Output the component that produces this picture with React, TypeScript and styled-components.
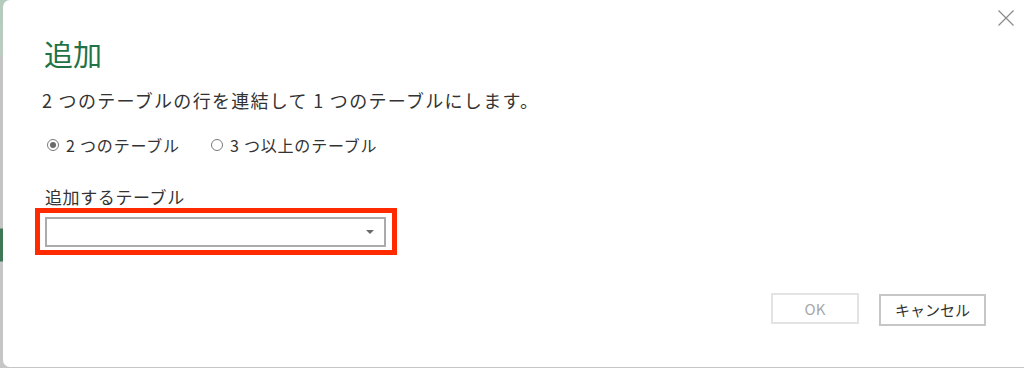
import React from "react";
import styled, { createGlobalStyle } from "styled-components";

const Global = createGlobalStyle`
  html, body { margin: 0; padding: 0; }
  body {
    width: 1024px;
    height: 368px;
    overflow: hidden;
    font-family: "Noto Sans CJK JP", "Noto Sans", sans-serif;
  }
`;

const Backdrop = styled.div`
  display: flex;
  width: 1024px;
  height: 368px;
  background: linear-gradient(
    to bottom,
    #b3cbbd 0px,
    #bcccc2 55px,
    #c4c4c4 56px,
    #c4c4c4 228px,
    #3e7656 229px,
    #3e7656 261px,
    #c6c6c6 262px,
    #c6c6c6 368px
  );
`;

const Dialog = styled.div`
  position: relative;
  flex: 1;
  margin-left: 3px;
  height: 367px;
  background: #ffffff;
  border-radius: 7px 0 0 7px;
  display: flex;
  flex-direction: column;
  padding: 35px 38px 0 39px;
  box-sizing: border-box;
  color: #333333;
`;

const CloseButton = styled.button`
  position: absolute;
  top: 9px;
  right: 9px;
  width: 18px;
  height: 18px;
  padding: 0;
  border: none;
  background: transparent;
  display: flex;
  align-items: center;
  justify-content: center;
`;

const Title = styled.h1`
  margin: 0;
  padding-left: 2px;
  font-size: 29px;
  line-height: 36px;
  font-weight: 400;
  color: #1f7346;
`;

const Description = styled.p`
  margin: 17px 0 0 0;
  font-size: 18px;
  line-height: 24px;
  letter-spacing: 1.3px;
  color: #333333;
`;

const RadioRow = styled.div`
  margin-top: 21px;
  display: flex;
  align-items: center;
  gap: 31px;
  height: 24px;
  padding-left: 5px;
`;

const RadioLabel = styled.label`
  display: flex;
  align-items: center;
  gap: 7px;
  font-size: 16px;
  line-height: 24px;
  color: #333333;
  letter-spacing: 0.8px;
`;

const RadioCircle = styled.span<{ $checked?: boolean }>`
  width: 12px;
  height: 12px;
  box-sizing: border-box;
  border-radius: 50%;
  border: 1px solid #7a7a7a;
  display: flex;
  align-items: center;
  justify-content: center;
  &::after {
    content: "";
    width: 6px;
    height: 6px;
    border-radius: 50%;
    background: ${(p) => (p.$checked ? "#6a6a6a" : "transparent")};
  }
`;

const FieldLabel = styled.div`
  margin-top: 29px;
  padding-left: 3px;
  font-size: 17px;
  line-height: 22px;
  letter-spacing: 0.6px;
  color: #333333;
`;

const Highlight = styled.div`
  margin-left: -7px;
  width: 362px;
  height: 47px;
  box-sizing: border-box;
  border: 5px solid #ff2a00;
  padding: 4px 6px 3px 5px;
`;

const SelectBox = styled.div`
  width: 341px;
  height: 30px;
  box-sizing: border-box;
  border: 2px solid #ababab;
  background: #ffffff;
  display: flex;
  align-items: center;
  justify-content: flex-end;
  padding-right: 10px;
`;

const Caret = styled.span`
  width: 0;
  height: 0;
  border-left: 4px solid transparent;
  border-right: 4px solid transparent;
  border-top: 4px solid #6a6a6a;
`;

const ButtonRow = styled.div`
  margin-top: 38px;
  display: flex;
  justify-content: flex-end;
  align-items: flex-start;
  gap: 20px;
`;

const Button = styled.button<{ $disabled?: boolean }>`
  height: 32px;
  box-sizing: border-box;
  background: #ffffff;
  border: 2px solid ${(p) => (p.$disabled ? "#e3e3e3" : "#c6c6c6")};
  color: ${(p) => (p.$disabled ? "#a8a8a8" : "#333333")};
  font-family: "Noto Sans CJK JP", "Noto Sans", sans-serif;
  font-size: 15px;
  line-height: 20px;
  padding: 0;
  display: flex;
  align-items: center;
  justify-content: center;
`;

const OkButton = styled(Button)`
  width: 88px;
  height: 31px;
`;

const CancelButton = styled(Button)`
  width: 107px;
  margin-top: 1px;
`;

export default function App() {
  return (
    <>
      <Global />
      <Backdrop>
        <Dialog>
          <CloseButton aria-label="閉じる">
            <svg width="18" height="18" viewBox="0 0 18 18">
              <path d="M1.5 1.5 L16.5 16.5 M16.5 1.5 L1.5 16.5" stroke="#8a8a8a" strokeWidth="1.2" fill="none" />
            </svg>
          </CloseButton>
          <Title>追加</Title>
          <Description>2 つのテーブルの行を連結して 1 つのテーブルにします。</Description>
          <RadioRow>
            <RadioLabel>
              <RadioCircle $checked />
              2 つのテーブル
            </RadioLabel>
            <RadioLabel>
              <RadioCircle />
              3 つ以上のテーブル
            </RadioLabel>
          </RadioRow>
          <FieldLabel>追加するテーブル</FieldLabel>
          <Highlight>
            <SelectBox>
              <Caret />
            </SelectBox>
          </Highlight>
          <ButtonRow>
            <OkButton $disabled>OK</OkButton>
            <CancelButton>キャンセル</CancelButton>
          </ButtonRow>
        </Dialog>
      </Backdrop>
    </>
  );
}
